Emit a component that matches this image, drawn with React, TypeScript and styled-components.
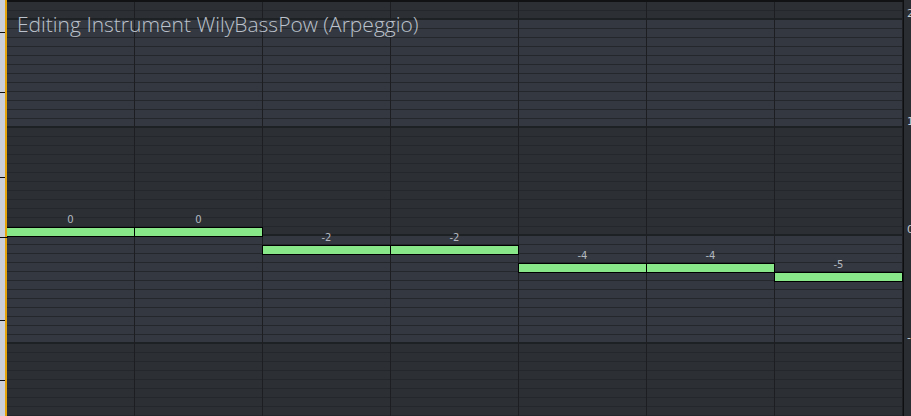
import React from 'react'
import styled, { createGlobalStyle } from 'styled-components'

const ROW_H = 9
const ROWS = 46
const ZERO_ROW = 25
const COL_W = 128

const steps = [0, 0, -2, -2, -4, -4, -5]
const scale = ['2', '1', '0', '-1']
const rulerTicks = [32, 92, 177, 237, 320, 380]

const GlobalStyle = createGlobalStyle`
  html, body {
    margin: 0;
    padding: 0;
    background: #1b1d20;
    overflow: hidden;
  }
`

const Editor = styled.div`
  display: flex;
  width: 911px;
  height: 416px;
  overflow: hidden;
  position: relative;
  background: #111214;
`

const Ruler = styled.div`
  position: relative;
  width: 5px;
  flex: none;
  background: #c9ced9;
`

const Tick = styled.div<{ $long?: boolean }>`
  position: absolute;
  left: 0;
  width: ${(p) => (p.$long ? '8px' : '5px')};
  height: 1px;
  background: #0c0c0c;
  z-index: 3;
`

const Playhead = styled.div`
  width: 2px;
  flex: none;
  background: #e5a50a;
  z-index: 2;
`

const Grid = styled.div`
  display: flex;
  flex: none;
  margin-top: 2px;
`

const Column = styled.div`
  position: relative;
  display: flex;
  flex-direction: column;
  width: ${COL_W}px;
  box-sizing: border-box;
  border-right: 1px solid #1c1e21;
`

const Row = styled.div<{ $light: boolean; $octave: boolean }>`
  height: ${ROW_H}px;
  flex: none;
  box-sizing: border-box;
  background: ${(p) => (p.$light ? '#343840' : '#2c3035')};
  border-bottom: ${(p) => (p.$octave ? '2px solid #1e2124' : '1px solid #24272b')};
`

const Bar = styled.div`
  position: absolute;
  left: -1px;
  width: ${COL_W + 1}px;
  height: 10px;
  box-sizing: border-box;
  background: #88e788;
  border: 1px solid #000;
  z-index: 1;
`

const Value = styled.div`
  position: absolute;
  left: 0;
  right: 0;
  text-align: center;
  font-family: 'DejaVu Sans', sans-serif;
  font-size: 10px;
  line-height: 10px;
  color: #b3b8c1;
`

const Scale = styled.div`
  flex: 1;
  display: flex;
  flex-direction: column;
  padding-top: 8px;
  background: #2a2d31;
  border-left: 1px solid #0e0f10;
`

const ScaleLabel = styled.div`
  height: 108px;
  flex: none;
  padding-left: 3px;
  font-family: 'DejaVu Sans', sans-serif;
  font-size: 11px;
  line-height: 12px;
  color: #c6cad2;
  white-space: nowrap;
`

const Title = styled.div`
  position: absolute;
  left: 17px;
  top: 11px;
  font-family: 'Open Sans', Lato, sans-serif;
  font-weight: 300;
  font-size: 21px;
  line-height: 27px;
  color: #bcc2cc;
  z-index: 4;
  white-space: nowrap;
`

function StepColumn({ value }: { value: number }) {
  const row = ZERO_ROW - value
  const top = row * ROW_H
  return (
    <Column>
      {Array.from({ length: ROWS }, (_, i) => {
        const octave = Math.floor((i + 10) / 12)
        return <Row key={i} $light={octave % 2 === 1} $octave={i % 12 === 1} />
      })}
      <Value style={{ top: top - 12 }}>{value}</Value>
      <Bar style={{ top }} />
    </Column>
  )
}

export default function App() {
  return (
    <>
      <GlobalStyle />
      <Editor>
        <Ruler>
          {rulerTicks.map((y) => (
            <Tick key={y} $long={y === 237} style={{ top: y }} />
          ))}
        </Ruler>
        <Playhead />
        <Grid>
          {steps.map((v, i) => (
            <StepColumn key={i} value={v} />
          ))}
        </Grid>
        <Scale>
          {scale.map((s) => (
            <ScaleLabel key={s}>{s}</ScaleLabel>
          ))}
        </Scale>
        <Title>Editing Instrument WilyBassPow (Arpeggio)</Title>
      </Editor>
    </>
  )
}
